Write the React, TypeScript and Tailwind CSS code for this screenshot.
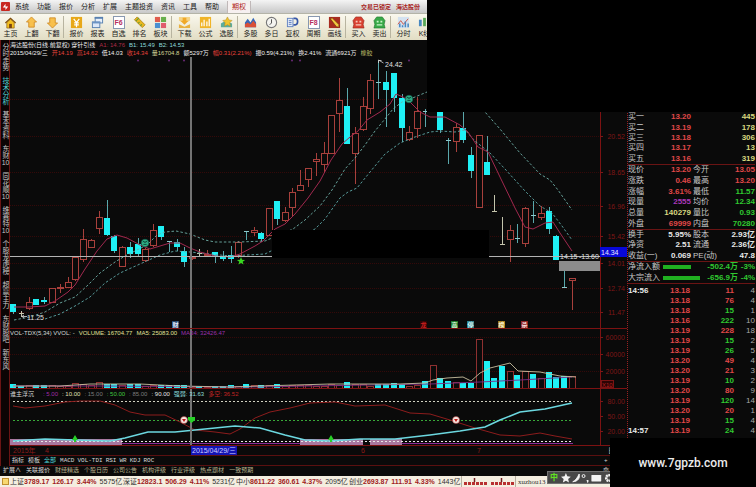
import React from "react";

const SANS = "font-['Liberation_Sans','Noto_Sans_CJK_SC',sans-serif]";

type Candle = [x: number, kind: "u" | "d" | "w", top: number, bottom: number, high: number, low: number, vol: number];

// x, colour (up / down / white), body top, body bottom, high, low, top of the volume bar
const candles: Candle[] = [
  [13, "d", 304, 312, 304, 314, 385], [21, "w", 313, 314, 311, 317, 387], [29, "u", 302, 309, 297, 310, 385],
  [36, "d", 299, 305, 299, 305, 386], [44, "d", 300, 302, 297, 304, 386], [52, "u", 288, 303, 288, 303, 385],
  [60, "u", 287, 289, 284, 293, 386], [68, "u", 282, 288, 277, 288, 386], [75, "u", 257, 280, 257, 281, 383],
  [83, "u", 239, 260, 229, 262, 384], [91, "u", 240, 248, 239, 248, 385], [99, "u", 217, 229, 211, 234, 382],
  [107, "d", 218, 235, 200, 236, 385], [114, "d", 236, 251, 235, 253, 385], [122, "u", 247, 267, 246, 267, 385],
  [130, "d", 247, 254, 242, 258, 385], [138, "d", 244, 254, 238, 257, 384], [145, "u", 249, 261, 248, 262, 386],
  [153, "u", 230, 246, 224, 247, 385], [161, "d", 226, 237, 226, 240, 386], [169, "d", 241, 242, 241, 252, 386],
  [177, "d", 242, 247, 239, 251, 386], [184, "d", 251, 262, 247, 267, 386], [192, "u", 257, 259, 256, 260, 387],
  [199, "w", 253, 254, 249, 256, 387], [207, "u", 254, 255, 250, 257, 387], [215, "d", 252, 256, 252, 263, 387],
  [223, "d", 256, 259, 251, 261, 387], [231, "d", 255, 259, 246, 263, 386], [238, "u", 242, 256, 241, 258, 386],
  [246, "d", 231, 232, 231, 240, 384], [254, "u", 230, 233, 227, 236, 385], [261, "d", 233, 239, 232, 242, 386],
  [269, "u", 208, 236, 208, 236, 385], [277, "d", 201, 219, 201, 225, 384], [285, "u", 212, 221, 207, 222, 386],
  [292, "u", 192, 208, 188, 216, 385], [300, "u", 185, 191, 170, 191, 385], [308, "u", 168, 180, 168, 187, 385],
  [316, "u", 159, 162, 153, 176, 386], [324, "u", 153, 165, 142, 173, 386], [331, "u", 115, 154, 115, 154, 384],
  [339, "u", 100, 114, 78, 132, 385], [347, "d", 106, 144, 88, 144, 382], [355, "u", 133, 154, 127, 184, 384],
  [363, "u", 106, 130, 97, 131, 384], [370, "u", 80, 109, 74, 114, 386], [378, "d", 82, 83, 61, 99, 384],
  [386, "d", 82, 90, 71, 127, 385], [394, "d", 73, 98, 73, 112, 383], [402, "d", 98, 128, 94, 142, 384],
  [409, "u", 132, 140, 126, 141, 386], [417, "u", 111, 129, 97, 138, 385], [425, "d", 111, 112, 109, 127, 381],
  [433, "u", 90, 100, 88, 104, 365], [440, "d", 108, 130, 106, 133, 378], [448, "d", 140, 141, 138, 164, 381],
  [456, "u", 127, 142, 123, 152, 382], [463, "d", 128, 140, 112, 143, 383], [471, "d", 155, 171, 147, 178, 383],
  [479, "u", 135, 208, 135, 208, 339], [487, "d", 162, 175, 136, 175, 361], [494, "w", 211, 212, 195, 212, 378],
  [502, "w", 244, 245, 217, 245, 366], [510, "u", 230, 240, 225, 262, 371], [517, "d", 238, 239, 224, 243, 375],
  [525, "u", 208, 244, 207, 247, 371], [533, "d", 215, 216, 201, 223, 374], [541, "u", 213, 218, 206, 220, 378],
  [549, "d", 211, 229, 207, 234, 372], [556, "d", 236, 260, 235, 260, 377], [564, "d", 287, 288, 271, 288, 376],
  [572, "u", 278, 281, 278, 310, 376],
];

const MA =
  "14,307 29,307 45,306 55,301 68,292 75,285 85,269 97,251 107,239 117,235 127,238 140,245 150,249 160,246 170,243 180,243 190,248 200,252 215,256 230,257 240,254 255,246 263,241 275,229 285,224 295,214 308,198 320,181 331,160 342,144 350,137 358,131 367,120 380,112 390,104 396,94 403,97 410,102 420,112 430,117 445,117 460,125 468,132 478,147 488,152 500,177 515,208 525,227 533,229 545,223 553,222 560,233 572,251";
const BAND_A =
  "14,320 30,317 45,312 60,303 75,297 88,285 100,273 115,262 125,256 135,251 147,245 157,235 165,232 176,231 190,234 205,240 215,242 240,242 265,241 293,229 305,220 320,206 332,190 345,169 355,158 365,145 375,131 385,119 393,109 402,102 415,97 427,92 450,90 470,98 485,112 500,129 520,153 540,174 550,180 558,190 572,210";
const BAND_B =
  "45,319 60,314 75,306 90,297 105,283 120,273 140,264 160,255 175,251 190,252 200,253 230,256 265,254 315,229 325,219 340,198 348,192 357,188 370,172 385,154 400,143 415,137 430,132 440,131 455,132 465,130 475,141 490,153 505,169 525,191 540,206 552,213 562,226 572,240";
const RED_LINE =
  "13,406 25,408 45,406 65,402 80,401 100,401 115,405 130,412 145,415 165,415 180,422 195,430 215,432 230,434 240,429 255,418 270,412 290,408 310,403 335,402 355,406 385,405 410,413 430,414 450,420 475,428 500,435 520,436 540,433 555,436 572,439";
const CYAN_LINE =
  "13,441 45,439 75,440 110,441 125,438 148,432 175,432 195,430 235,426 260,428 285,435 305,440 330,441 360,439 395,439 430,435 460,431 485,427 500,420 520,412 545,409 572,403";

const AXIS = "#7e1616";
const LINE = "#7c1212";

function color(kind: Candle[1]) {
  return kind === "u" ? "#a8403c" : kind === "d" ? "#1ff0f5" : "#c4c4ac";
}

function Grid({ rows }: { rows: number[] }) {
  return (
    <g stroke="#340909" strokeDasharray="1 1" shapeRendering="crispEdges">
      {rows.map((y) => (
        <line key={y} x1="10" x2="600" y1={y + 0.5} y2={y + 0.5} />
      ))}
    </g>
  );
}

function Smiley({ x, y }: { x: number; y: number }) {
  return (
    <g>
      <circle cx={x} cy={y} r="3.8" fill="#2fae86" stroke="#14584a" strokeWidth="0.6" />
      <path d={`M${x - 2.2} ${y - 0.8}l1.2-1 1 1.6 1-1.6 1.2 1M${x - 1.6} ${y + 1.4}h3.2`} stroke="#06332b" strokeWidth="0.8" fill="none" />
    </g>
  );
}

function Target({ x, y }: { x: number; y: number }) {
  return (
    <g>
      <circle cx={x} cy={y} r="3.5" fill="#f6e9e2" stroke="#b43030" strokeWidth="0.5" />
      <path d={`M${x - 2} ${y - 1}h4l-2 3z`} fill="#c01818" />
    </g>
  );
}

const badges: [number, string, string, string][] = [
  [175, "财", "#24486e", "#e6f0ff"],
  [423, "龙", "#2c0404", "#d02020"],
  [454, "高", "#1d7a2a", "#e6ffe6"],
  [470, "停", "#2a7f8c", "#e6ffff"],
  [501, "榜", "#a07818", "#fff6d8"],
  [524, "杀", "#8c2020", "#ffe6e6"],
];

const priceTicks: [number, string][] = [
  [136, "20.52"], [172, "18.65"], [206, "16.96"], [236, "15.42"], [263, "14.01"], [288, "12.74"], [312, "11.47"],
];

function AxisLabels({ ticks }: { ticks: [number, string][] }) {
  return (
    <>
      {ticks.map(([y, t]) => (
        <g key={t}>
          <text x="625" y={y + 3} fontSize="7" textAnchor="end" fill={AXIS}>{t}</text>
          <line x1="600" x2="603" y1={y + 0.5} y2={y + 0.5} stroke={AXIS} />
        </g>
      ))}
    </>
  );
}

function Legend({ items }: { items: [string, string][] }) {
  return (
    <div className="flex gap-[4px] whitespace-pre text-[6px] leading-[8px]">
      {items.map(([t, c], i) => (
        <span key={i} className={c}>{t}</span>
      ))}
    </div>
  );
}

function PricePanel() {
  return (
    <section className="relative flex">
      <svg viewBox="10 40 590 289" preserveAspectRatio="xMaxYMin meet" className="h-[289px] min-w-0 flex-1">
        <Grid rows={[99, 136, 172, 205, 236, 263, 288, 312]} />
        <g fill="#6b2a78">
          {[138, 169, 184, 292, 300, 409].map((x) => <circle key={x} cx={x} cy="60.5" r="1" />)}
        </g>
        <g shapeRendering="crispEdges">
          {candles.map(([x, k, t, b, h, l]) => (
            <g key={x}>
              {h < t && <rect x={x} y={h} width="1" height={t - h} fill={k === "d" ? "#5aa8ac" : color(k)} />}
              {l > b && <rect x={x} y={b} width="1" height={l - b} fill={k === "d" ? "#5aa8ac" : color(k)} />}
              {k === "u" ? (
                <rect x={x - 2.5} y={t + 0.5} width="6" height={Math.max(b - t - 1, 1)} fill="#0a0a0a" stroke={color(k)} />
              ) : (
                <rect x={b - t > 1 ? x - 3 : x - 2} y={t} width={b - t > 1 ? 6 : 5} height={b - t} fill={b - t > 1 ? color(k) : k === "d" ? "#8cc8cc" : color(k)} />
              )}
            </g>
          ))}
        </g>
        <g fill="none">
          <polyline points={BAND_A} stroke="#6fb0a8" strokeDasharray="2.500 2" strokeWidth="0.9" />
          <polyline points={BAND_B} stroke="#5fa8a8" strokeDasharray="2.500 2" strokeWidth="0.9" />
          <polyline points={MA} stroke="#a0284e" />
        </g>
        <g shapeRendering="crispEdges" fill="#b4b4b4">
          <rect x="10" y="256" width="590" height="1" />
          <rect x="190" y="57" width="2" height="272" fill="#747474" />
        </g>
        <Smiley x={145} y={243} />
        <Smiley x={409} y={99} />
        <path d="M241 257l1.1 2.8 3 .1-2.4 1.8.9 2.9-2.6-1.7-2.6 1.7.9-2.9-2.4-1.8 3-.1z" fill="#38d820" />
        <path d="M378.500 63v-3l5 3M378.500 60.500h3M22 316.500h5M22 316.500l2-1.500M22 316.500l2 1.500" stroke="#d8d8d8" strokeWidth="0.8" fill="none" />
        <text x="385" y="67" fontSize="7" fill="#e0e0e0">24.42</text>
        <text x="27" y="320" fontSize="7" fill="#e0e0e0">11.25</text>
        <text x="560" y="259" fontSize="7" fill="#e0e0e0">14.15</text>
        <text x="579" y="259" fontSize="7" fill="#e0e0e0">-13.60</text>
        <rect x="559" y="261" width="41" height="10" fill="#8c8c8c" />
        {badges.map(([x, t, bg, fg]) => (
          <g key={t}>
            <rect x={x - 3} y="321" width="7" height="7" fill={bg} />
            <text x={x + 0.5} y="327" fontSize="6" fontWeight="700" textAnchor="middle" fill={fg}>{t}</text>
          </g>
        ))}
        <rect x="10" y="328" width="590" height="1" fill={LINE} />
        <rect x="272" y="230" width="217" height="28" fill="#000" />
      </svg>
      <svg viewBox="600 40 27 289" className="h-[289px] w-[27px]">
        <rect x="600" y="40" width="1" height="289" fill={LINE} />
        <AxisLabels ticks={priceTicks} />
        <rect x="600" y="247" width="27" height="10" fill="#0808d8" />
        <text x="601" y="254.500" fontSize="7" fill="#e8e8ff">14.34</text>
        <rect x="600" y="328" width="27" height="1" fill={LINE} />
      </svg>
      <div className="absolute left-0 top-px">
        <Legend items={[
          ["海达股份(日线.前复权) 穿针引线", "text-[#f0f0f0]"], ["A1: 14.76", "text-[#b02c48]"],
          ["B1: 15.49", "text-[#8cdcdc]"], ["B2: 14.53", "text-[#8cdcdc]"],
        ]} />
        <div className="flex gap-[4px] whitespace-pre text-[6px] leading-[8px] text-[#f0f0f0]">
          <span>2015/04/29/三</span>
          <span className="text-[#e8423a]">开14.19</span>
          <span className="text-[#e8423a]">高14.62</span>
          <span>低14.03</span>
          <span className="text-[#e8423a]">收14.34</span>
          <span className="text-[#d4d498]">量16704.8</span>
          <span>额5297万</span>
          <span className="text-[#e8423a]">幅0.31(2.21%)</span>
          <span>振0.59(4.21%)</span>
          <span>换2.41%</span>
          <span>流通6921万</span>
          <span className="text-[#b4b464]">橡胶</span>
        </div>
      </div>
    </section>
  );
}

function VolumePanel() {
  return (
    <section className="relative flex">
      <svg viewBox="10 329 590 60" preserveAspectRatio="xMaxYMin meet" className="h-[60px] min-w-0 flex-1">
        <Grid rows={[337, 354, 371]} />
        <g shapeRendering="crispEdges">
          {candles.map(([x, k, , , , , v]) =>
            k === "u" ? (
              <rect key={x} x={x - 2.5} y={v + 0.5} width="6" height={Math.max(388 - v, 1)} fill="#0a0a0a" stroke="#8e3030" />
            ) : (
              <rect key={x} x={x - 3} y={v - (v > 384 ? 1 : 0)} width="6" height={389 - v} fill="#1ff0f5" />
            ),
          )}
        </g>
        <polyline fill="none" stroke="#7a2a86" points="13,386 100,386 250,387 430,384 480,382 520,380 572,377" strokeWidth="0.9" />
        <polyline fill="none" stroke="#c8c0a0" strokeWidth="0.9" points="13,386 60,386 90,384 140,384 180,386 230,387 260,386 330,384 400,384 425,383 433,380 447,378 463,377 471,381 480,373 490,368 510,363 518,371 540,372 560,376 576,377" />
        <rect x="190" y="329" width="2" height="60" fill="#747474" />
        <rect x="10" y="388" width="590" height="1" fill={LINE} />
      </svg>
      <svg viewBox="600 329 27 60" className="h-[60px] w-[27px]">
        <rect x="600" y="329" width="1" height="60" fill={LINE} />
        <AxisLabels ticks={[[337, "60000"], [354, "40000"], [371, "20000"]]} />
        <rect x="601.500" y="380.500" width="12" height="7" fill="#2c0404" stroke="#7a1414" />
        <text x="602" y="386.500" fontSize="6" fill="#b02020">X10</text>
        <rect x="600" y="388" width="27" height="1" fill={LINE} />
      </svg>
      <div className="absolute left-0 top-0">
        <Legend items={[
          ["VOL-TDX(5,34) VVOL: -", "text-[#d8d8d8]"], ["VOLUME: 16704.77", "text-[#e0e098]"],
          ["MA5: 25083.00", "text-[#e0e098]"], ["MA34: 32426.47", "text-[#9c30ac]"],
        ]} />
      </div>
    </section>
  );
}

function IndicatorPanel() {
  return (
    <section className="relative flex">
      <svg viewBox="10 389 590 57" preserveAspectRatio="xMaxYMin meet" className="h-[57px] min-w-0 flex-1">
        <g fill="#a878a0">
          <rect x="10" y="439" width="112" height="7" />
          <rect x="300" y="439" width="63" height="7" />
          <rect x="370" y="439" width="32" height="7" />
        </g>
        <rect x="122" y="443" width="178" height="1" fill="#8a2a96" />
        <rect x="402" y="443" width="171" height="1" fill="#8a2a96" />
        <g strokeDasharray="2 2" shapeRendering="crispEdges">
          <line x1="13" x2="573" y1="401.500" y2="401.500" stroke="#d0d0c0" />
          <line x1="13" x2="573" y1="420.500" y2="420.500" stroke="#38a838" />
          <line x1="13" x2="573" y1="441.500" y2="441.500" stroke="#e8e8e8" />
        </g>
        <polyline fill="none" stroke="#8c1c1c" points={RED_LINE} />
        <polyline fill="none" stroke="#6cd8e0" strokeWidth="1.600" points={CYAN_LINE} />
        <rect x="190" y="389" width="2" height="57" fill="#747474" />
        <path d="M75 435l3 5h-2v2h-2v-2h-2zM331 435l3 5h-2v2h-2v-2h-2zM188 417h7v3l-3.500 3-3.500-3z" fill="#28d028" />
        <Target x={184} y={420} />
        <Target x={456} y={420} />
        <rect x="10" y="445" width="590" height="1" fill={LINE} />
      </svg>
      <svg viewBox="600 389 27 57" className="h-[57px] w-[27px]">
        <rect x="600" y="389" width="1" height="57" fill={LINE} />
        <AxisLabels ticks={[[401, "80.00"], [416, "50.00"], [431, "20.00"]]} />
        <rect x="600" y="445" width="27" height="1" fill={LINE} />
      </svg>
      <div className="absolute left-0 top-px">
        <Legend items={[
          ["谁主浮沉   ", "text-[#d8d8d8]"], [": 5.00", "text-[#a02ca8]"], [": 10.00", "text-[#e0e0b8]"],
          [": 15.00", "text-[#7c7c7c]"], [": 50.00", "text-[#40c840]"], [": 85.00", "text-[#7c7c7c]"],
          [": 90.00", "text-[#e4e4e4]"], ["强弱: 31.63", "text-[#8cdcdc]"], ["多空: 36.52", "text-[#c02424]"],
        ]} />
      </div>
    </section>
  );
}

const icons: Record<string, React.ReactNode> = {
  home: <><path d="M1 7l6-5.500L13 7l-1 1-5-4.500L2 8z" fill="#7a4a10" /><path d="M3 7l4-3.500L11 7v6H3z" fill="#f4c020" stroke="#8a5a10" strokeWidth=".7" /><path d="M5.500 8.500h3V13h-3z" fill="#7a4410" /></>,
  up: <path d="M7 1l5.500 5.500H10V12H4V6.500H1.500z" fill="#f8c04c" stroke="#c88018" strokeWidth=".8" />,
  down: <path d="M7 13L1.500 7.500H4V2h6v5.500h2.500z" fill="#f8c04c" stroke="#c88018" strokeWidth=".8" />,
  yen: <><rect x="1" y="1" width="12" height="12" fill="#e8a818" /><path d="M4 3l3 4 3-4M7 7v5M4.500 7.500h5M4.500 9.500h5" stroke="#fff" strokeWidth="1.300" fill="none" /></>,
  windows: <><rect x="4.500" y="1.500" width="8" height="6" fill="#e8f0fa" stroke="#5880b0" /><path d="M4 1h9v2H4z" fill="#5880b0" /><rect x="1.500" y="6.500" width="8" height="6" fill="#dce8f8" stroke="#5880b0" /><path d="M1 6h9v2H1z" fill="#6c94c4" /></>,
  ruler: <><path d="M1.500 4l3-3L13 9.500l-3 3z" fill="#e8b820" stroke="#a87c10" strokeWidth=".8" /><path d="M3 5.500L6.500 2M5.500 8l1.500-1.500M8 10.500L9.500 9" stroke="#6c9c30" strokeWidth="1.200" /></>,
  blocks: <><path d="M1 1h5.500v5.500H1z" fill="#e05c4c" /><path d="M7.500 1H13v5.500H7.500z" fill="#68b04c" /><path d="M1 7.500h5.500V13H1z" fill="#4c90d0" /><path d="M7.500 7.500H13V13H7.500z" fill="#e05c6c" /></>,
  download: <><path d="M1 1h12v4l-2 1H3L1 5z" fill="#f4d488" /><path d="M7 9.500L2.500 5H5V2h4v3h2.500z" fill="#f0a828" /><path d="M1 9l6 2.500L13 9v4H1z" fill="#e8b040" /></>,
  formula: <><rect x="1" y="1" width="12" height="12" fill="#f0b428" /><path d="M3 11V7M5.500 11V4M8.500 11V6M11 11V3" stroke="#fff" strokeWidth="1.300" /></>,
  pick: <><path d="M1 8l5-3 7 3v4H1z" fill="#5cac9c" /><path d="M8 1l1.700 3.300 3.300.5-2.500 2.500.6 3.700L8 9.300 4.900 11l.6-3.700L3 4.800l3.300-.5z" fill="#f0c430" stroke="#b08418" strokeWidth=".5" /></>,
  multi: <><path d="M1 12V7l3-4 3 4 3-5 3 5v5z" fill="#3868b8" /><path d="M1 12V9l3-2 3 2 3-4 3 4v3z" fill="#d85038" /></>,
  clock: <><circle cx="7" cy="7" r="5.500" fill="#f4f4f0" stroke="#787878" strokeWidth="1.200" /><path d="M7 3.500V7.500L5 9.500" stroke="#484848" fill="none" /></>,
  copy: <><rect x="1.500" y="2.500" width="6" height="9" fill="#e4ecf8" stroke="#6080c0" /><path d="M3 5h3M3 7h3M3 9h3" stroke="#6080c0" /><path d="M8 2.500h2a2.500 3.500 0 010 7H8" stroke="#3858a8" fill="none" strokeWidth="1.800" /></>,
  pencil: <><rect x="1" y="1" width="12" height="12" fill="#a82c20" /><path d="M2.500 3l2-1 7 7 .5 3-3-.5z" fill="#f0c840" stroke="#602008" strokeWidth=".6" /></>,
  buy: <><path d="M4 1h6l3 4-1 4 1 4H1l1-4-1-4z" fill="#d84030" stroke="#902018" strokeWidth=".6" /><path d="M4 5h2v2H4zM8 5h2v2H8zM4 9h6v1.200H4z" fill="#f8c8b8" /></>,
  sell: <><path d="M4 1h6l3 4-1 4 1 4H1l1-4-1-4z" fill="#38a848" stroke="#187028" strokeWidth=".6" /><path d="M4 5h2v2H4zM8 5h2v2H8zM4 9h6v1.200H4z" fill="#c8f4c8" /></>,
  intraday: <><rect x="1" y="1" width="12" height="12" fill="#d4e2f0" /><path d="M1 9l3-4 3 4 5-6" stroke="#d05040" fill="none" /><path d="M3 12V8M6 12v-2M9 12V6M12 12V8" stroke="#4888c0" strokeWidth="1.600" /></>,
  kline: <><path d="M1 4h3v7H1z" fill="#4888c0" /><path d="M5.500 2h3v9h-3z" fill="#58a858" /><path d="M10 4h3v8h-3z" fill="#d05848" /></>,
};

function FKey({ label }: { label: string }) {
  return (
    <span className="flex h-[13px] w-[12px] items-center justify-center border border-[#8898b0] bg-white text-[7px] font-bold leading-none text-[#b83060]">
      {label}
    </span>
  );
}

const toolGroups: [string, string][][] = [
  [["home", "主页"], ["up", "上翻"], ["down", "下翻"]],
  [["yen", "报价"], ["windows", "报表"], ["F6", "自选"], ["ruler", "排名"], ["blocks", "板块"]],
  [["download", "下载"], ["formula", "公式"], ["pick", "选股"]],
  [["multi", "多股"], ["clock", "多日"], ["copy", "复权"], ["F8", "周期"], ["pencil", "画线"]],
  [["buy", "买入"], ["sell", "卖出"]],
  [["intraday", "分时"], ["kline", "K线"]],
];

function TopBars() {
  return (
    <header>
      <nav className="flex h-[13px] items-center bg-gradient-to-b from-[#f4f4f4] to-[#c8c8c8] text-[7px] leading-[12px] text-[#181818]">
        <svg viewBox="0 0 10 10" className="ml-px mr-[1px] h-[9px] w-[9px]">
          <rect width="10" height="10" rx="1" fill="#c82820" />
          <path d="M2 6l3-4v3h3L5 9V6z" fill="#fff" />
        </svg>
        {["系统", "功能", "报价", "分析", "扩展", "主题投资", "资讯", "工具", "帮助"].map((t) => (
          <button key={t} className="px-[4px]">{t}</button>
        ))}
        <button className="ml-[4px] border-x border-[#c0b8b8] bg-[#f6f0f0] px-[4px] text-[#b01c1c]">期权</button>
        <span className="ml-[110px] text-[6px] font-bold text-[#a82424]">交易已锁定</span>
        <span className="ml-[5px] text-[6px] font-bold text-[#a82424]">海达股份</span>
      </nav>
      <div className="flex h-[27px] items-center border-t border-[#b4b4a8] bg-gradient-to-b from-[#faf8ee] to-[#e2ddc4]">
        {toolGroups.map((g, i) => (
          <div key={i} className={i ? "flex border-l border-[#b8b4a0] pl-[2px]" : "flex"}>
            {g.map(([icon, t]) => (
              <button key={t} className="flex w-[21px] flex-col items-center text-[7px] leading-[9px] text-[#202020]">
                {icon === "F6" || icon === "F8" ? <FKey label={icon} /> : (
                  <svg viewBox="0 0 14 14" className="h-[13px] w-[13px]">{icons[icon]}</svg>
                )}
                <span className="whitespace-nowrap">{t}</span>
              </button>
            ))}
          </div>
        ))}
      </div>
    </header>
  );
}

const sideTabs: [string, string?][] = [
  ["分时走势"], ["技术分析"], ["基本资料"], ["东财", "10"], ["同花顺", "10"], ["维赛特", "10"], ["个股龙虎榜"], ["超赢主力"], ["东财股吧"], ["新东风"],
];

function SideTabs() {
  return (
    <nav className="flex w-[10px] shrink-0 flex-col items-center gap-[6px] border-x border-[#6a1414] bg-[#0c0404] pt-[3px]">
      {sideTabs.map(([t, n], i) => (
        <button
          key={i}
          className={`text-[7px] leading-[8px] [text-orientation:upright] [writing-mode:vertical-rl] ${i === 1 ? "text-[#50d4d4]" : "text-[#c8c8c8]"}`}
        >
          {t}
          {n && <span className="[text-combine-upright:all]">{n}</span>}
        </button>
      ))}
    </nav>
  );
}

const R = "text-[#e04848]";
const G = "text-[#30c830]";
const W = "text-[#e8e8e8]";
const Y = "text-[#d8d880]";

const bids: [string, string, string][] = [
  ["买一", "13.20", "445"], ["买二", "13.19", "178"], ["买三", "13.18", "306"], ["买四", "13.17", "13"], ["买五", "13.16", "319"],
];

type Stat = [string, string, string, string, string, string];
const stats: Stat[] = [
  ["现价", "13.20", R, "今开", "13.05", R],
  ["涨跌", "0.46", R, "最高", "13.20", R],
  ["涨幅", "3.61%", R, "最低", "11.57", G],
  ["现量", "2555", "text-[#a838b8]", "均价", "12.34", G],
  ["总量", "140279", Y, "量比", "0.93", G],
  ["外盘", "69999", R, "内盘", "70280", G],
];
const capital: Stat[] = [
  ["换手", "5.95%", W, "股本", "2.93亿", W],
  ["净资", "2.51", W, "流通", "2.36亿", W],
  ["收益(一)", "0.069", W, "PE(动)", "47.8", W],
];

function Stats({ rows }: { rows: Stat[] }) {
  return (
    <>
      {rows.map(([a, b, bc, c, d, dc]) => (
        <dl key={a} className="flex">
          <div className="flex w-[63px] justify-between">
            <dt className="whitespace-nowrap text-[#c8c8c8]">{a}</dt>
            <dd className={`font-bold ${bc}`}>{b}</dd>
          </div>
          <div className="ml-[2px] flex flex-1 justify-between">
            <dt className="whitespace-nowrap text-[#c8c8c8]">{c}</dt>
            <dd className={`whitespace-nowrap font-bold ${dc}`}>{d}</dd>
          </div>
        </dl>
      ))}
    </>
  );
}

const trades: [string, string, string, string, string][] = [
  ["14:56", "13.18", "11", R, "4"], ["", "13.18", "76", R, "4"], ["", "13.18", "15", G, "1"], ["", "13.16", "222", G, "10"],
  ["", "13.19", "228", R, "18"], ["", "13.19", "15", G, "2"], ["", "13.19", "26", G, "5"], ["", "13.20", "49", R, "4"],
  ["", "13.20", "21", R, "3"], ["", "13.19", "10", G, "2"], ["", "13.20", "80", R, "9"], ["", "13.19", "120", G, "14"],
  ["", "13.20", "20", R, "1"], ["", "13.19", "15", G, "4"], ["14:57", "13.19", "24", G, "4"],
];

function QuotePanel() {
  const section = "grid content-around border-b border-[#6a1414]";
  return (
    <aside className="w-[129px] shrink-0 border-l border-dotted border-[#9a2020] pr-px pt-[72px] text-[8px] leading-[10px]">
      <div className={`${section} h-[53px]`}>
        {bids.map(([a, p, v]) => (
          <div key={a} className="flex font-bold">
            <span className="w-[20px] font-normal text-[#c8c8c8]">{a}</span>
            <span className={`w-[43px] text-right ${R}`}>{p}</span>
            <span className={`flex-1 text-right ${Y}`}>{v}</span>
          </div>
        ))}
      </div>
      <div className={`${section} h-[65px]`}><Stats rows={stats} /></div>
      <div className={`${section} h-[32px]`}><Stats rows={capital} /></div>
      <div className={`${section} h-[22px]`}>
        {[["净流入额", "w-[28px]", "-502.4万", "-3%"], ["大宗流入", "w-[37px]", "-656.9万", "-4%"]].map(([a, w, v, p]) => (
          <div key={a} className="flex items-center whitespace-nowrap">
            <span className="w-[35px] text-[#c8c8c8]">{a}</span>
            <span className={`h-[4px] bg-[#20b020] ${w}`} />
            <span className={`flex-1 text-right font-bold ${G}`}>{v}</span>
            <span className={`w-[17px] text-right font-bold ${G}`}>{p}</span>
          </div>
        ))}
      </div>
      <table className="mt-[2px] w-full table-fixed border-collapse font-bold">
        <tbody>
          {trades.map(([t, p, v, c, n], i) => (
            <tr key={i} className="h-[10px]">
              <td className="w-[24px] p-0 text-[#e8e8e8]">{t}</td>
              <td className={`w-[38px] p-0 text-right ${R}`}>{p}</td>
              <td className={`w-[44px] p-0 text-right ${c}`}>{v}</td>
              <td className="p-0 text-right font-normal text-[#a8a8a8]">{n}</td>
            </tr>
          ))}
        </tbody>
      </table>
    </aside>
  );
}

const indices: string[][] = [
  ["上证", "3789.17", "126.17", "3.44%", "5575亿"],
  ["深证", "12823.1", "506.29", "4.11%", "5231亿"],
  ["中小", "8611.22", "360.61", "4.37%", "2095亿"],
  ["创业", "2693.87", "111.91", "4.33%", "1443亿"],
];

export default function App() {
  return (
    <div className={`relative min-h-screen w-full overflow-hidden bg-[#0a0a0a] ${SANS}`}>
      <TopBars />
      <main className="flex">
        <SideTabs />
        <div className="min-w-0 flex-1">
          <PricePanel />
          <VolumePanel />
          <IndicatorPanel />
          <div className="flex h-[10px] border-b border-[#5a1010] text-[7px] leading-[9px] text-[#8c1a1a]">
            <span className="w-[35px] pl-[3px]">2015年</span>
            <span className="w-[146px]">4</span>
            <span className="bg-[#1414b4] px-px text-[#d0d0ff]">2015/04/29/三</span>
            <span className="ml-[124px] w-[116px]">6</span>
            <span className="flex-1">7</span>
            <span className="w-[19px] text-[#c8c8c8]">日</span>
          </div>
          <div className="flex h-[10px] gap-[3px] border-b border-[#5a1010] pl-[2px] font-['Liberation_Mono','Noto_Sans_CJK_SC',monospace] text-[6px] leading-[9px] text-[#d8d8d8]">
            {["指标", "模板", "全部", "MACD", "VOL-TDI", "RSI", "WR", "KDJ", "ROC"].map((t, i) => (
              <button key={t} className={i === 2 ? "pr-px text-[#50d4d4]" : i < 2 ? "pr-px" : ""}>{t}</button>
            ))}
            <span className="ml-auto w-[23px]">+</span>
          </div>
        </div>
        <QuotePanel />
      </main>
      <nav className="flex h-[10px] gap-[4px] pl-[3px] text-[6px] leading-[9px] text-[#b4b08c]">
        {["扩展∧", "关联报价", "财经精选", "个股日历", "公司公告", "机构评级", "行业评级", "热点题材", "一致预期"].map((t, i) => (
          <a key={t} href="#" className={i < 2 ? "mr-px text-[#d8d8d8]" : "mr-px"}>{t}</a>
        ))}
        <span className="ml-auto mr-[147px] text-[#c8c8c8]">命</span>
      </nav>
      <footer className="flex h-[11px] items-center whitespace-nowrap bg-[#f4eee0] text-[7px] leading-[10px] text-[#303030]">
        <span className="ml-[2px] h-[7px] w-[7px] border border-[#c09030] bg-[#f8d870]" />
        {indices.map(([n, a, b, c, d]) => (
          <div key={n} className="flex w-[113px] gap-[3px] pl-px">
            <span>{n}<b className="text-[#a02020]">{a}</b></span>
            <b className="text-[#a02020]">{b}</b>
            <b className="text-[#a02020]">{c}</b>
            <span>{d}</span>
          </div>
        ))}
        <svg viewBox="0 0 56 11" className="h-[11px] w-[56px]">
          <path d="M.5 0v11M54.500 0v11" stroke="#b8b0a0" />
          <path d="M3 7.500h24M30 7.500h24" stroke="#b83030" strokeWidth="3" strokeDasharray="3 1" />
          <path d="M13.500 2v4M40.500 2v4" stroke="#702020" strokeWidth="1.500" />
        </svg>
        <span className="ml-px font-['Liberation_Serif',serif]">xuzhou13</span>
      </footer>

      {/* input-method bar floating over the status line */}
      <div className="absolute bottom-[3px] left-[547px] flex h-[13px] w-[66px] items-center gap-[3px] border border-[#707070] bg-[#484848] pl-[2px]">
        <button className="text-[8px] font-bold leading-[10px] text-[#60e020]">中</button>
        <svg viewBox="0 0 52 12" className="h-[12px] w-[52px]" fill="#f4f4f4">
          <path d="M5 1l1.400 3.300 3.600.3-2.700 2.400.8 3.500L5 8.700 1.900 10.500l.8-3.500L0 4.600l3.600-.3z" />
          <path d="M18.500 2c1 4-1 7.500-6.500 7.800 3-1 4.500-4 6.500-7.800z" stroke="#f4f4f4" />
          <circle cx="23" cy="4" r="1.500" fill="none" stroke="#f4f4f4" />
          <path d="M26 8h2v2l-1 1z" />
          <rect x="31" y="3" width="10" height="6.500" rx=".5" />
          <circle cx="49" cy="6" r="3.200" fill="none" stroke="#f4f4f4" strokeWidth="2" strokeDasharray="2 .8" />
          <circle cx="49" cy="6" r="2.300" fill="none" stroke="#f4f4f4" />
        </svg>
      </div>

      <div className="absolute right-0 top-0 h-[112px] w-[329px] bg-black" />
      <div className="absolute bottom-0 right-0 flex h-[49px] w-[146px] items-center justify-center bg-black font-['Roboto',sans-serif] text-[12px] font-medium text-[#ececec]">
        www.7gpzb.com
      </div>
    </div>
  );
}
